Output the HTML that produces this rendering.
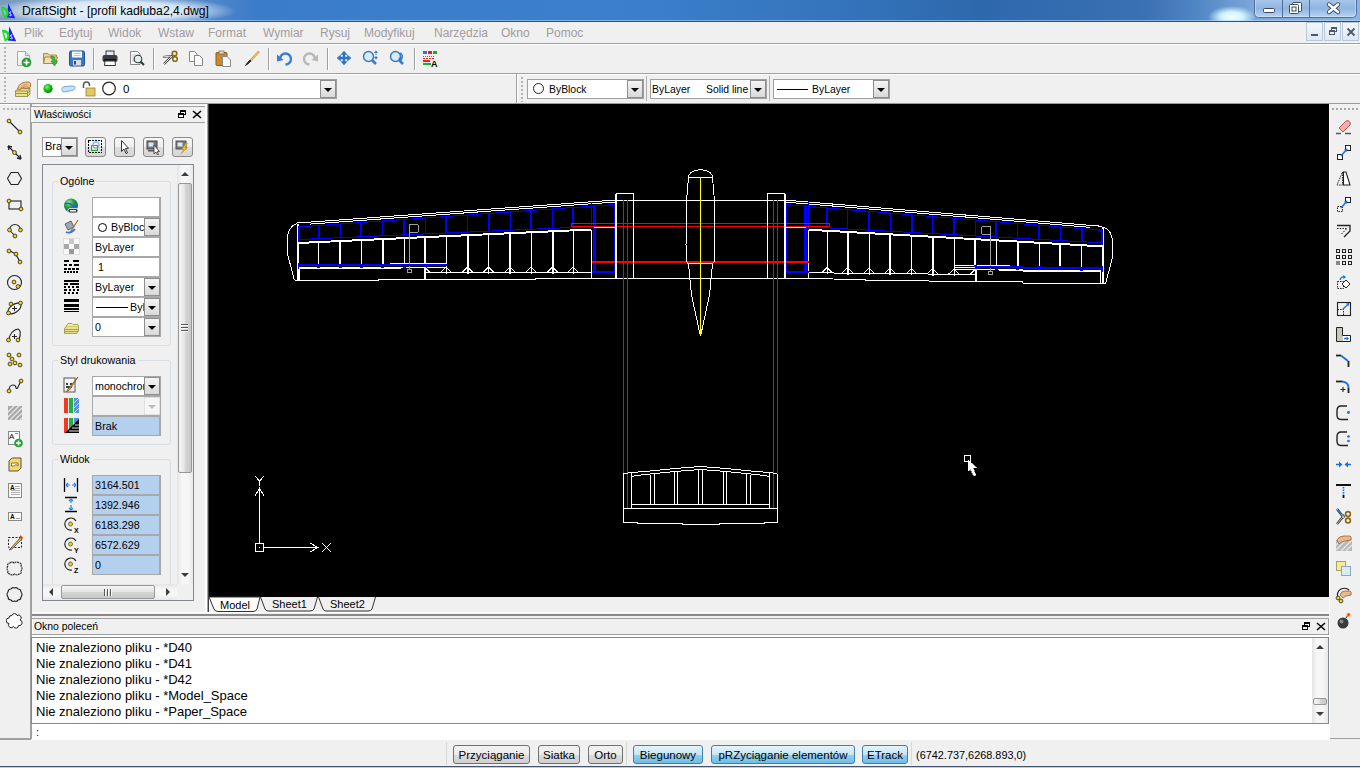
<!DOCTYPE html>
<html><head><meta charset="utf-8">
<style>
*{box-sizing:border-box;margin:0;padding:0}
html,body{width:1360px;height:768px;overflow:hidden;background:#f0f0f0;font-family:"Liberation Sans",sans-serif;font-size:12px;color:#000}
.a{position:absolute}
#title{left:0;top:0;width:1360px;height:21px;background:linear-gradient(90deg,#7c9cbc 0%,#6f98c8 8%,#5488c8 15%,#3a7cc8 19%,#3c80cc 45%,#3474bc 62%,#2e68ac 72%,#3a70b4 84%,#4f86c4 88%,#7aa6d8 92%,#8cb4e0 100%)}
#titleline{left:0;top:21px;width:1360px;height:1px;background:#3f4d5e}
.mi{position:absolute;top:26px;color:#a09ca0;font-size:12px;line-height:14px}
.hl{position:absolute;height:1px;background:#a0a0a0}
.vl{position:absolute;width:1px;background:#a0a0a0}
.grip{position:absolute;width:2px;border-left:1px dotted #a0a0a0}
.combo{position:absolute;background:#fff;border:1px solid #8e8f8f}
.ddb{position:absolute;top:1px;width:16px;bottom:1px;right:1px;background:linear-gradient(#f2f2f2,#d8d8d8);border:1px solid #9b9b9b}
.ddb:after{content:"";position:absolute;left:4px;top:6px;border-left:4px solid transparent;border-right:4px solid transparent;border-top:4px solid #000}
.ptxt{position:absolute;font-size:11px;line-height:13px}
.field{position:absolute;left:92px;width:69px;height:20px;background:#fff;border:1px solid #a0a0a0;font-size:11px;line-height:17px;padding-left:2px;overflow:hidden;white-space:nowrap;color:#000}
.blue{background:#b5d1ee}
.gbox{position:absolute;left:52px;width:119px;border:1px solid #d5dfe5;border-radius:3px}
.glabel{position:absolute;left:59px;font-size:11px;line-height:13px;background:#f0f0f0;padding:0 2px;color:#000}
.sbtn{position:absolute;top:745px;height:19px;border:1px solid #707070;border-radius:3px;background:linear-gradient(#f2f2f2 0%,#ebebeb 50%,#dddddd 51%,#cfcfcf 100%);font-size:11.5px;line-height:18px;text-align:center;color:#000}
.sbtn.on{border-color:#3c7fb1;background:linear-gradient(#e5f4fc 0%,#c4e5f6 50%,#98d1ef 51%,#6dbde9 100%)}
.cmd{position:absolute;left:36px;font-size:13px;line-height:16px;color:#000;white-space:nowrap}
</style></head><body>
<!-- title bar -->
<div id="title" class="a"></div>
<div class="a" style="left:0;top:0;width:300px;height:21px;background:radial-gradient(ellipse 125px 15px at 112px 11px,rgba(240,248,255,0.95) 0%,rgba(235,245,255,0.85) 60%,rgba(255,255,255,0) 100%)"></div>
<div class="a" style="left:1190px;top:0;width:90px;height:21px;background:radial-gradient(ellipse 24px 11px at 42px 17px,rgba(235,255,255,1) 0%,rgba(215,250,255,0.95) 45%,rgba(255,255,255,0) 100%)"></div>
<div class="a" style="left:0;top:20px;width:1360px;height:1px;background:rgba(190,220,250,0.55)"></div>
<div id="titleline" class="a"></div>
<div class="a" style="left:22px;top:3px;font-size:12.2px;line-height:16px;color:#000">DraftSight - [profil kadłuba2,4.dwg]</div>
<!-- menu bar -->
<div class="a" style="left:0;top:22px;width:1360px;height:21px;background:#f0f0f0"></div>
<div class="hl" style="left:0;top:43px;width:1360px"></div>
<div class="mi" style="left:24px">Plik</div>
<div class="mi" style="left:59px">Edytuj</div>
<div class="mi" style="left:108px">Widok</div>
<div class="mi" style="left:158px">Wstaw</div>
<div class="mi" style="left:208px">Format</div>
<div class="mi" style="left:263px">Wymiar</div>
<div class="mi" style="left:320px">Rysuj</div>
<div class="mi" style="left:364px">Modyfikuj</div>
<div class="mi" style="left:434px">Narzędzia</div>
<div class="mi" style="left:501px">Okno</div>
<div class="mi" style="left:546px">Pomoc</div>
<!-- toolbars -->
<div class="hl" style="left:0;top:73px;width:1360px"></div>
<div class="hl" style="left:0;top:103px;width:1360px;background:#9a9a9a"></div>

<!-- left toolbar -->
<div class="vl" style="left:30px;top:104px;height:636px"></div>
<!-- properties panel -->
<!--PANEL-->
<div class="a" style="left:30px;top:104px;width:2px;height:635px;background:#a0a0a0"></div>
<div class="a" style="left:0;top:738px;width:31px;height:2px;background:#a0a0a0"></div>
<div class="a" style="left:0;top:104px;width:30px;height:1px;background:#fff"></div>
<div class="a" style="left:3px;top:108px;width:26px;height:2px;background:repeating-linear-gradient(90deg,#b4b4b4 0 2px,transparent 2px 4px)"></div>
<div class="a" style="left:32px;top:105px;width:174px;height:1px;background:#fff"></div>
<div class="a" style="left:31px;top:106px;width:175px;height:17px;border:1px solid #a0a0a0;border-left:none;background:#f0f0f0"></div>
<div class="a" style="left:32px;top:107px;width:1px;height:15px;background:#fff"></div>
<div class="ptxt" style="left:34px;top:108px;font-size:10.5px;line-height:13px">Właściwości</div>
<svg class="a" style="left:177px;top:109px" width="10" height="10" shape-rendering="crispEdges"><rect x="3.5" y="1.5" width="5" height="4" fill="none" stroke="#000"/><rect x="3" y="1" width="6" height="2" fill="#000"/><rect x="1.5" y="4.5" width="5" height="4" fill="#fff" stroke="#000"/><rect x="1" y="4" width="6" height="2" fill="#000"/></svg>
<svg class="a" style="left:192px;top:110px" width="10" height="9"><path d="M1 1L9 8M9 1L1 8" stroke="#000" stroke-width="1.6"/></svg>
<div class="a" style="left:206px;top:104px;width:1px;height:510px;background:#f8f8f8"></div>
<div class="combo" style="left:42px;top:137px;width:36px;height:20px;border-color:#9b9b9b"></div>
<div class="ptxt" style="left:45px;top:140px;font-size:11px">Bra</div>
<div class="a" style="left:61px;top:138px;width:16px;height:18px;background:linear-gradient(#f4f4f4,#d9d9d9);border:1px solid #8e8e8e"><div style="position:absolute;left:3px;top:7px;border-left:4px solid transparent;border-right:4px solid transparent;border-top:4px solid #000"></div></div>
<div class="a" style="left:85px;top:137px;width:21px;height:20px;border:1px solid #8a8a8a;border-radius:3px;background:linear-gradient(#f7f7f7 0%,#efefef 50%,#dcdcdc 51%,#d7d7d7 100%)"></div>
<div class="a" style="left:114px;top:137px;width:21px;height:20px;border:1px solid #8a8a8a;border-radius:3px;background:linear-gradient(#f7f7f7 0%,#efefef 50%,#dcdcdc 51%,#d7d7d7 100%)"></div>
<div class="a" style="left:143px;top:137px;width:21px;height:20px;border:1px solid #8a8a8a;border-radius:3px;background:linear-gradient(#f7f7f7 0%,#efefef 50%,#dcdcdc 51%,#d7d7d7 100%)"></div>
<div class="a" style="left:172px;top:137px;width:21px;height:20px;border:1px solid #8a8a8a;border-radius:3px;background:linear-gradient(#f7f7f7 0%,#efefef 50%,#dcdcdc 51%,#d7d7d7 100%)"></div>
<svg class="a" style="left:87px;top:139px" width="17" height="16" shape-rendering="crispEdges"><rect x="1.5" y="1.5" width="13" height="12" fill="none" stroke="#000" stroke-dasharray="2,1"/><rect x="4.5" y="6.5" width="6" height="5" fill="none" stroke="#1ab01a"/><circle cx="9" cy="6" r="3.2" fill="none" stroke="#6a9cf0" shape-rendering="auto"/></svg>
<svg class="a" style="left:116px;top:139px" width="17" height="16"><path d="M5.5 1.5L5.5 12.5L8 10L10 14.5L11.5 13.8L9.5 9.5L12.5 9.3Z" fill="#fff" stroke="#333" stroke-width="1"/></svg>
<svg class="a" style="left:145px;top:139px" width="17" height="16"><rect x="2" y="2" width="10" height="8" fill="#777" stroke="#444"/><rect x="3.5" y="3.5" width="5" height="4" fill="#d8e8f8"/><rect x="3" y="11" width="7" height="1.5" fill="#555"/><path d="M9 6L9 15L11 13L12.5 16L13.5 15.5L12.3 12.6L14.5 12.5Z" fill="#fff" stroke="#333" stroke-width="0.8"/></svg>
<svg class="a" style="left:174px;top:139px" width="17" height="16"><rect x="2" y="2" width="10" height="8" fill="#777" stroke="#555"/><rect x="3.5" y="3.5" width="5" height="4" fill="#d8e8f8"/><path d="M12 4L7.5 10.5L10 10.5L7 15L13.5 8.5L11 8.5L13.5 4Z" fill="#e8c020" stroke="#b08800" stroke-width="0.5"/></svg>
<div class="a" style="left:42px;top:164px;width:152px;height:437px;border:1px solid #828790;background:#f0f0f0"></div>
<div class="a" style="left:177px;top:165px;width:16px;height:419px;background:linear-gradient(90deg,#e4e4e4,#f6f6f6 30%,#f6f6f6 70%,#e8e8e8)"></div>
<div class="a" style="left:181px;top:172px;border-left:4px solid transparent;border-right:4px solid transparent;border-bottom:4px solid #3d3d3d"></div>
<div class="a" style="left:178px;top:183px;width:14px;height:290px;border:1px solid #979797;border-radius:2px;background:linear-gradient(90deg,#f4f4f4 0%,#e6e6e6 45%,#d4d4d4 55%,#c8c8c8 100%)"></div>
<svg class="a" style="left:180px;top:323px" width="9" height="9" shape-rendering="crispEdges"><path d="M1 1.5H8M1 4.5H8M1 7.5H8" stroke="#555" stroke-width="1"/><path d="M1 2.5H8M1 5.5H8M1 8.5H8" stroke="#fff" stroke-width="1"/></svg>
<div class="a" style="left:181px;top:573px;border-left:4px solid transparent;border-right:4px solid transparent;border-top:4px solid #3d3d3d"></div>
<div class="a" style="left:43px;top:584px;width:134px;height:16px;background:linear-gradient(#e4e4e4,#f6f6f6 30%,#f6f6f6 70%,#e8e8e8)"></div>
<div class="a" style="left:177px;top:584px;width:16px;height:16px;background:#f0f0f0"></div>
<div class="a" style="left:49px;top:588px;border-top:4px solid transparent;border-bottom:4px solid transparent;border-right:4px solid #3d3d3d"></div>
<div class="a" style="left:166px;top:588px;border-top:4px solid transparent;border-bottom:4px solid transparent;border-left:4px solid #3d3d3d"></div>
<div class="a" style="left:61px;top:585px;width:94px;height:14px;border:1px solid #979797;border-radius:2px;background:linear-gradient(#f4f4f4 0%,#e6e6e6 45%,#d4d4d4 55%,#c8c8c8 100%)"></div>
<svg class="a" style="left:103px;top:588px" width="9" height="9" shape-rendering="crispEdges"><path d="M1.5 1V8M4.5 1V8M7.5 1V8" stroke="#555" stroke-width="1"/><path d="M2.5 1V8M5.5 1V8M8.5 1V8" stroke="#fff" stroke-width="1"/></svg>
<div class="a" style="left:43px;top:165px;width:134px;height:419px;overflow:hidden">
<div class="a" style="left:9px;top:16px;width:119px;height:165px;border:1px solid #d5dfe5;border-radius:3px"></div>
<div class="a" style="left:15px;top:10px;width:38px;height:13px;background:#f0f0f0"></div>
<div class="ptxt" style="left:17px;top:10px;font-size:10.7px">Ogólne</div>
<div class="a" style="left:9px;top:195px;width:119px;height:85px;border:1px solid #d5dfe5;border-radius:3px"></div>
<div class="a" style="left:15px;top:189px;width:80px;height:13px;background:#f0f0f0"></div>
<div class="ptxt" style="left:17px;top:189px;font-size:10.7px">Styl drukowania</div>
<div class="a" style="left:9px;top:294px;width:119px;height:200px;border:1px solid #d5dfe5;border-radius:3px"></div>
<div class="a" style="left:15px;top:288px;width:36px;height:13px;background:#f0f0f0"></div>
<div class="ptxt" style="left:17px;top:288px;font-size:10.7px">Widok</div>
<div class="a" style="left:49px;top:32px;width:69px;height:20px;background:#fff;border:1px solid #a8a8a8;border-width:1px 2px 1px 1px"></div>
<div class="a" style="left:49px;top:52px;width:69px;height:20px;background:#fff;border:1px solid #a8a8a8;border-width:1px 2px 1px 1px"></div>
<div class="ptxt" style="left:52px;top:56px;font-size:10.7px;white-space:nowrap;overflow:hidden;width:50px"><span style="display:inline-block;width:9px;height:9px;border:1px solid #000;border-radius:50%;margin:0 4px 0 3px;vertical-align:-1px"></span>ByBloc</div>
<div class="a" style="left:101px;top:53px;width:16px;height:18px;background:linear-gradient(#f4f4f4,#d9d9d9);border:1px solid #8e8e8e"><div style="position:absolute;left:3px;top:7px;border-left:4px solid transparent;border-right:4px solid transparent;border-top:4px solid #000"></div></div>
<div class="a" style="left:49px;top:72px;width:69px;height:20px;background:#fff;border:1px solid #a8a8a8;border-width:1px 2px 1px 1px"></div>
<div class="ptxt" style="left:52px;top:76px;font-size:10.7px;white-space:nowrap;overflow:hidden;width:64px">ByLayer</div>
<div class="a" style="left:49px;top:92px;width:69px;height:20px;background:#fff;border:1px solid #a8a8a8;border-width:1px 2px 1px 1px"></div>
<div class="ptxt" style="left:52px;top:96px;font-size:10.7px;white-space:nowrap;overflow:hidden;width:64px">&nbsp;1</div>
<div class="a" style="left:49px;top:112px;width:69px;height:20px;background:#fff;border:1px solid #a8a8a8;border-width:1px 2px 1px 1px"></div>
<div class="ptxt" style="left:52px;top:116px;font-size:10.7px;white-space:nowrap;overflow:hidden;width:50px">ByLayer</div>
<div class="a" style="left:101px;top:113px;width:16px;height:18px;background:linear-gradient(#f4f4f4,#d9d9d9);border:1px solid #8e8e8e"><div style="position:absolute;left:3px;top:7px;border-left:4px solid transparent;border-right:4px solid transparent;border-top:4px solid #000"></div></div>
<div class="a" style="left:49px;top:132px;width:69px;height:20px;background:#fff;border:1px solid #a8a8a8;border-width:1px 2px 1px 1px"></div>
<div class="ptxt" style="left:52px;top:136px;font-size:10.7px;white-space:nowrap;overflow:hidden;width:50px"><span style="display:inline-block;width:32px;height:1px;background:#000;vertical-align:3px;margin-right:2px;margin-left:1px"></span>ByLayer</div>
<div class="a" style="left:101px;top:133px;width:16px;height:18px;background:linear-gradient(#f4f4f4,#d9d9d9);border:1px solid #8e8e8e"><div style="position:absolute;left:3px;top:7px;border-left:4px solid transparent;border-right:4px solid transparent;border-top:4px solid #000"></div></div>
<div class="a" style="left:49px;top:152px;width:69px;height:20px;background:#fff;border:1px solid #a8a8a8;border-width:1px 2px 1px 1px"></div>
<div class="ptxt" style="left:52px;top:156px;font-size:10.7px;white-space:nowrap;overflow:hidden;width:50px">0</div>
<div class="a" style="left:101px;top:153px;width:16px;height:18px;background:linear-gradient(#f4f4f4,#d9d9d9);border:1px solid #8e8e8e"><div style="position:absolute;left:3px;top:7px;border-left:4px solid transparent;border-right:4px solid transparent;border-top:4px solid #000"></div></div>
<div class="a" style="left:49px;top:211px;width:69px;height:20px;background:#fff;border:1px solid #a8a8a8;border-width:1px 2px 1px 1px"></div>
<div class="ptxt" style="left:52px;top:215px;font-size:10.7px;white-space:nowrap;overflow:hidden;width:50px">monochrome.ctb</div>
<div class="a" style="left:101px;top:212px;width:16px;height:18px;background:linear-gradient(#f4f4f4,#d9d9d9);border:1px solid #8e8e8e"><div style="position:absolute;left:3px;top:7px;border-left:4px solid transparent;border-right:4px solid transparent;border-top:4px solid #000"></div></div>
<div class="a" style="left:49px;top:231px;width:69px;height:20px;background:#f0f0f0;border:1px solid #a8a8a8;border-width:1px 2px 1px 1px"></div>
<div class="a" style="left:101px;top:232px;width:16px;height:18px;background:#f6f6f6;border:1px solid #e0e0e0"><div style="position:absolute;left:3px;top:7px;border-left:4px solid transparent;border-right:4px solid transparent;border-top:4px solid #bbb"></div></div>
<div class="a" style="left:49px;top:251px;width:69px;height:20px;background:#b4d0ef;border:1px solid #a8a8a8;border-width:1px 2px 1px 1px"></div>
<div class="ptxt" style="left:52px;top:255px;font-size:10.7px;white-space:nowrap;overflow:hidden;width:64px">Brak</div>
<div class="a" style="left:49px;top:310px;width:69px;height:20px;background:#b4d0ef;border:1px solid #a8a8a8;border-width:1px 2px 1px 1px"></div>
<div class="ptxt" style="left:52px;top:314px;font-size:10.7px;white-space:nowrap;overflow:hidden;width:64px">3164.501</div>
<div class="a" style="left:49px;top:330px;width:69px;height:20px;background:#b4d0ef;border:1px solid #a8a8a8;border-width:1px 2px 1px 1px"></div>
<div class="ptxt" style="left:52px;top:334px;font-size:10.7px;white-space:nowrap;overflow:hidden;width:64px">1392.946</div>
<div class="a" style="left:49px;top:350px;width:69px;height:20px;background:#b4d0ef;border:1px solid #a8a8a8;border-width:1px 2px 1px 1px"></div>
<div class="ptxt" style="left:52px;top:354px;font-size:10.7px;white-space:nowrap;overflow:hidden;width:64px">6183.298</div>
<div class="a" style="left:49px;top:370px;width:69px;height:20px;background:#b4d0ef;border:1px solid #a8a8a8;border-width:1px 2px 1px 1px"></div>
<div class="ptxt" style="left:52px;top:374px;font-size:10.7px;white-space:nowrap;overflow:hidden;width:64px">6572.629</div>
<div class="a" style="left:49px;top:390px;width:69px;height:20px;background:#b4d0ef;border:1px solid #a8a8a8;border-width:1px 2px 1px 1px"></div>
<div class="ptxt" style="left:52px;top:394px;font-size:10.7px;white-space:nowrap;overflow:hidden;width:64px">0</div>
<svg class="a" style="left:20px;top:33px" width="17" height="17"><defs><radialGradient id="gl" cx="0.35" cy="0.3" r="0.8"><stop offset="0" stop-color="#9fe8a0"/><stop offset="0.45" stop-color="#1e9a3a"/><stop offset="1" stop-color="#1650b8"/></radialGradient></defs><circle cx="8" cy="7.5" r="7" fill="url(#gl)"/><path d="M2 6Q6 4 9 7T14 9" fill="none" stroke="#2a60d0" stroke-width="1.5"/><rect x="5" y="10.5" width="10" height="4.5" rx="2" fill="#333" stroke="#fff" stroke-width="0.8"/><rect x="7" y="12" width="6" height="1.5" fill="#fff"/></svg>
<svg class="a" style="left:20px;top:53px" width="17" height="17"><path d="M2 6L8 3L11 9L5 12Z" fill="#9aa8b8" stroke="#445" stroke-width="0.8"/><path d="M3 14Q8 16 12 11" fill="none" stroke="#2a70e0" stroke-width="1.6"/><path d="M15 2L9 12L7.5 14L8.5 11.5Z" fill="#e0b060" stroke="#a07020" stroke-width="0.8"/></svg>
<svg class="a" style="left:20px;top:73px" width="17" height="17"><rect x="0.5" y="0.5" width="16" height="16" fill="#fafafa" stroke="#e0e0e0"/><rect x="6" y="1" width="5" height="5" fill="#c8c8c8"/><rect x="1" y="6" width="5" height="5" fill="#a8a8a8"/><rect x="11" y="6" width="5" height="5" fill="#a8a8a8"/><rect x="6" y="11" width="5" height="5" fill="#989898"/></svg>
<svg class="a" style="left:20px;top:94px" width="17" height="17"><g fill="#000" shape-rendering="crispEdges"><rect x="1" y="1" width="5" height="2"/><rect x="10" y="1" width="6" height="2"/><rect x="1" y="5" width="3" height="2"/><rect x="6" y="5" width="3" height="2"/><rect x="11" y="5" width="5" height="2"/><rect x="1" y="9" width="3" height="2"/><rect x="5" y="9" width="3" height="2"/><rect x="9" y="9" width="3" height="2"/><rect x="13" y="9" width="3" height="2"/><rect x="1" y="12" width="2" height="2"/><rect x="4" y="12" width="2" height="2"/><rect x="7" y="12" width="2" height="2"/><rect x="10" y="12" width="2" height="2"/><rect x="13" y="12" width="2" height="2"/></g></svg>
<svg class="a" style="left:20px;top:114px" width="17" height="17"><g fill="#000" shape-rendering="crispEdges"><rect x="1" y="1" width="15" height="2"/><rect x="1" y="4" width="4" height="2"/><rect x="7" y="4" width="9" height="2"/><rect x="1" y="7" width="2" height="2"/><rect x="5" y="7" width="2" height="2"/><rect x="9" y="7" width="2" height="2"/><rect x="13" y="7" width="3" height="2"/><rect x="1" y="10" width="3" height="2"/><rect x="6" y="10" width="2" height="2"/><rect x="10" y="10" width="2" height="2"/><rect x="14" y="10" width="2" height="2"/><rect x="1" y="13" width="2" height="2"/><rect x="5" y="13" width="2" height="2"/><rect x="9" y="13" width="2" height="2"/><rect x="13" y="13" width="2" height="2"/></g></svg>
<svg class="a" style="left:20px;top:133px" width="17" height="17"><g fill="#000" shape-rendering="crispEdges"><rect x="1" y="1" width="15" height="3"/><rect x="1" y="6" width="15" height="3"/><rect x="1" y="10" width="15" height="2"/><rect x="1" y="13" width="15" height="1"/></g></svg>
<svg class="a" style="left:20px;top:154px" width="17" height="17"><path d="M1.5 9.5L3 7.5H15.5V12L14 14.5H1.5Z" fill="#e8e08a" stroke="#9a9040" stroke-width="0.8"/><path d="M1.5 10.5H15.5M1.5 12.5H15" stroke="#9a9040" stroke-width="0.8"/><path d="M3 7.5L5 4.5H9L10 5.5H15L15.5 7.5" fill="#f4ec9a" stroke="#9a9040" stroke-width="0.8"/></svg>
<svg class="a" style="left:20px;top:211px" width="17" height="17"><rect x="1" y="2" width="11" height="14" fill="#f4f4f4" stroke="#555" stroke-width="1"/><path d="M3 8H5M7 8H9M3 11H9" stroke="#000" stroke-width="1.5"/><path d="M15 1L5 13L3.5 15.5L6.5 14Z" fill="#e0a040" stroke="#805010" stroke-width="0.8"/></svg>
<svg class="a" style="left:20px;top:232px" width="17" height="17"><rect x="1" y="1" width="4" height="15" fill="#f03a20"/><rect x="6" y="1" width="4" height="15" fill="#22b040"/><rect x="11" y="1" width="5" height="15" fill="#5590e8"/><path d="M11 6L16 1M11 11L16 6M11 16L16 11" stroke="#cfe0ff" stroke-width="1"/></svg>
<svg class="a" style="left:20px;top:252px" width="17" height="17"><rect x="1" y="1" width="4" height="15" fill="#f03a20"/><rect x="6" y="1" width="4" height="11" fill="#22b040"/><rect x="11" y="1" width="5" height="5" fill="#5590e8"/><path d="M2 16L16 2L16 16Z" fill="#000"/><path d="M6 14H16M9 11H16M12 8H16" stroke="#fff" stroke-width="0.9"/></svg>
<svg class="a" style="left:20px;top:312px" width="17" height="17"><path d="M1.5 1V15M14.5 1V15" stroke="#000" stroke-width="1.3"/><path d="M3 8H7M9 8H13" stroke="#2a7ae8" stroke-width="1.2"/><path d="M3 8L5 6M3 8L5 10M13 8L11 6M13 8L11 10" stroke="#2a7ae8" stroke-width="1.2"/></svg>
<svg class="a" style="left:20px;top:331px" width="17" height="17"><path d="M2 1.5H14M2 15.5H14" stroke="#000" stroke-width="1.3"/><path d="M8 3V7M8 9V14" stroke="#2a7ae8" stroke-width="1.2"/><path d="M8 3L6 5M8 3L10 5M8 14L6 12M8 14L10 12" stroke="#2a7ae8" stroke-width="1.2"/></svg>
<svg class="a" style="left:20px;top:351px" width="17" height="17"><path d="M13 5A6 6 0 1 0 9 14" fill="none" stroke="#222" stroke-width="1.2"/><circle cx="7.5" cy="8" r="2" fill="#f0e000" stroke="#222" stroke-width="0.6"/><text x="11" y="16.5" font-size="7" font-weight="bold" font-family="Liberation Sans" fill="#000">X</text></svg>
<svg class="a" style="left:20px;top:371px" width="17" height="17"><path d="M13 5A6 6 0 1 0 9 14" fill="none" stroke="#222" stroke-width="1.2"/><circle cx="7.5" cy="8" r="2" fill="#f0e000" stroke="#222" stroke-width="0.6"/><text x="11" y="16.5" font-size="7" font-weight="bold" font-family="Liberation Sans" fill="#000">Y</text></svg>
<svg class="a" style="left:20px;top:391px" width="17" height="17"><path d="M13 5A6 6 0 1 0 9 14" fill="none" stroke="#222" stroke-width="1.2"/><circle cx="7.5" cy="8" r="2" fill="#f0e000" stroke="#222" stroke-width="0.6"/><text x="11" y="16.5" font-size="7" font-weight="bold" font-family="Liberation Sans" fill="#000">Z</text></svg>
</div>
<!--/PANEL-->
<!--LTB-->
<svg class="a" style="left:6px;top:118px" width="18" height="18"><path d="M3 3L14 14" fill="none" stroke="#222" stroke-width="1.1"/><circle cx="3" cy="3" r="1.9" fill="#ffd800" stroke="#333" stroke-width="0.9"/><circle cx="14" cy="14" r="1.9" fill="#ffd800" stroke="#333" stroke-width="0.9"/></svg>
<svg class="a" style="left:6px;top:144px" width="18" height="18"><path d="M2 2L15 15" fill="none" stroke="#222" stroke-width="1.1"/><path d="M2 2L6 3M2 2L3 6M15 15L11 14M15 15L14 11" stroke="#222" stroke-width="1.3"/><circle cx="8.5" cy="8.5" r="1.9" fill="#ffd800" stroke="#333" stroke-width="0.9"/></svg>
<svg class="a" style="left:6px;top:170px" width="18" height="18"><path d="M5 2.5H12L15.5 8.5L12 14.5H5L1.5 8.5Z" fill="none" stroke="#222" stroke-width="1.1"/></svg>
<svg class="a" style="left:6px;top:196px" width="18" height="18"><rect x="3" y="5" width="12" height="8" fill="none" stroke="#222" stroke-width="1.1"/><circle cx="3" cy="5" r="1.9" fill="#ffd800" stroke="#333" stroke-width="0.9"/><circle cx="15" cy="13" r="1.9" fill="#ffd800" stroke="#333" stroke-width="0.9"/></svg>
<svg class="a" style="left:6px;top:222px" width="18" height="18"><path d="M3.5 8A5.5 5.5 0 0 1 14.5 8" fill="none" stroke="#222" stroke-width="1.1"/><path d="M3.5 8L9 14" fill="none" stroke="#222" stroke-width="1.1"/><circle cx="3.5" cy="8" r="1.9" fill="#ffd800" stroke="#333" stroke-width="0.9"/><circle cx="14.5" cy="8" r="1.9" fill="#ffd800" stroke="#333" stroke-width="0.9"/><circle cx="9" cy="14" r="1.9" fill="#ffd800" stroke="#333" stroke-width="0.9"/></svg>
<svg class="a" style="left:6px;top:248px" width="18" height="18"><path d="M3 3Q10 4 14 14" fill="none" stroke="#222" stroke-width="1.1"/><circle cx="3" cy="3" r="1.9" fill="#ffd800" stroke="#333" stroke-width="0.9"/><circle cx="10" cy="6" r="1.9" fill="#ffd800" stroke="#333" stroke-width="0.9"/><circle cx="14" cy="14" r="1.9" fill="#ffd800" stroke="#333" stroke-width="0.9"/></svg>
<svg class="a" style="left:6px;top:274px" width="18" height="18"><circle cx="8.5" cy="8.5" r="7" fill="none" stroke="#222" stroke-width="1.1"/><circle cx="8" cy="8" r="1.9" fill="#ffd800" stroke="#333" stroke-width="0.9"/><circle cx="12" cy="12.5" r="1.9" fill="#ffd800" stroke="#333" stroke-width="0.9"/></svg>
<svg class="a" style="left:6px;top:300px" width="18" height="18"><ellipse cx="8.5" cy="8.5" rx="7.5" ry="4" transform="rotate(-35 8.5 8.5)" fill="none" stroke="#222" stroke-width="1.1"/><path d="M8.5 6V11M6 8.5H11" stroke="#222" stroke-width="1"/><circle cx="2.5" cy="13" r="1.9" fill="#ffd800" stroke="#333" stroke-width="0.9"/><circle cx="5" cy="4" r="1.9" fill="#ffd800" stroke="#333" stroke-width="0.9"/><circle cx="14.5" cy="3" r="1.9" fill="#ffd800" stroke="#333" stroke-width="0.9"/></svg>
<svg class="a" style="left:6px;top:326px" width="18" height="18"><path d="M2.5 14Q5 4 12 3Q16 4 13 14" fill="none" stroke="#222" stroke-width="1.1"/><path d="M8.5 8V13M6 10.5H11" stroke="#222" stroke-width="1"/><circle cx="2.5" cy="14" r="1.9" fill="#ffd800" stroke="#333" stroke-width="0.9"/><circle cx="12" cy="14" r="1.9" fill="#ffd800" stroke="#333" stroke-width="0.9"/></svg>
<svg class="a" style="left:6px;top:352px" width="18" height="18"><circle cx="3" cy="3" r="1.9" fill="#ffd800" stroke="#333" stroke-width="0.9"/><circle cx="13" cy="3" r="1.9" fill="#ffd800" stroke="#333" stroke-width="0.9"/><circle cx="6" cy="7" r="1.9" fill="#ffd800" stroke="#333" stroke-width="0.9"/><circle cx="4" cy="12" r="1.9" fill="#ffd800" stroke="#333" stroke-width="0.9"/><circle cx="9" cy="11" r="1.9" fill="#ffd800" stroke="#333" stroke-width="0.9"/><circle cx="14" cy="13" r="1.9" fill="#ffd800" stroke="#333" stroke-width="0.9"/></svg>
<svg class="a" style="left:6px;top:378px" width="18" height="18"><path d="M3 13Q3 7 7 7Q10 7 10 10Q11 12 13 7L15 3" fill="none" stroke="#222" stroke-width="1.1" stroke-width="1.4"/><circle cx="3" cy="13" r="1.9" fill="#ffd800" stroke="#333" stroke-width="0.9"/><circle cx="15" cy="3" r="1.9" fill="#ffd800" stroke="#333" stroke-width="0.9"/></svg>
<svg class="a" style="left:6px;top:404px" width="18" height="18"><rect x="2" y="2" width="14" height="14" fill="#a8a8a8"/><path d="M2 8L8 2M2 13L13 2M4 16L16 4M9 16L16 9M14 16L16 14" stroke="#e8e8e8" stroke-width="1.2"/></svg>
<svg class="a" style="left:6px;top:430px" width="18" height="18"><rect x="2.5" y="1.5" width="11" height="13" fill="#fff" stroke="#888"/><text x="3" y="9" font-size="8" font-family="Liberation Sans" fill="#000">A</text><path d="M9 3.5H12" stroke="#888"/><circle cx="12.5" cy="13" r="4.3" fill="#1aa52a"/><path d="M12.5 10.5V15.5M10 13H15" stroke="#fff" stroke-width="1.5"/></svg>
<svg class="a" style="left:6px;top:456px" width="18" height="18"><path d="M3 5L6 2H15L15 12L12 15H3Z" fill="#f8d860" stroke="#555" stroke-width="1"/><path d="M5.5 10V7H12V10L10 8.5L8 10Z" fill="#fff" stroke="#555" stroke-width="0.8"/></svg>
<svg class="a" style="left:6px;top:482px" width="18" height="18"><rect x="2.5" y="1.5" width="13" height="14" fill="#fff" stroke="#888"/><path d="M5 8.5H14M5 10.5H14M5 12.5H14M9 4.5H14M9 6.5H14" stroke="#999" stroke-width="0.8"/><text x="4" y="8" font-size="6.5" font-weight="bold" font-family="Liberation Sans" fill="#000">A</text></svg>
<svg class="a" style="left:6px;top:508px" width="18" height="18"><rect x="2.5" y="4.5" width="13" height="8" fill="#fff" stroke="#888"/><text x="4" y="11" font-size="6.5" font-weight="bold" font-family="Liberation Sans" fill="#000">A</text><path d="M10 10.5H14" stroke="#888" stroke-width="0.8"/></svg>
<svg class="a" style="left:6px;top:534px" width="18" height="18"><rect x="2.5" y="3.5" width="13" height="10" fill="none" stroke="#222" stroke-dasharray="2,1.5"/><path d="M15 3L5 14L3 16L6 15L16 5Z" fill="#f0c020" stroke="#444" stroke-width="0.8"/><path d="M14 2L16.5 4.5" stroke="#e04040" stroke-width="2"/></svg>
<svg class="a" style="left:6px;top:560px" width="18" height="18"><path d="M4 3Q6 1 8 3Q10 1 13 3Q16 3 15 6Q17 8.5 15 11Q16 14 13 14Q11 16 8.5 14Q6 16 4 14Q1 14 2 11Q0 8.5 2 6Q1 3 4 3Z" fill="none" stroke="#222" stroke-width="1.1" stroke-width="1" stroke-dasharray="2,0.6"/></svg>
<svg class="a" style="left:6px;top:586px" width="18" height="18"><path d="M8.5 2Q11 1 12 3Q15 3 15 6Q17 8.5 15 11Q15 14 12 14Q11 16 8.5 15Q6 16 5 14Q2 14 2 11Q0 8.5 2 6Q2 3 5 3Q6 1 8.5 2Z" fill="none" stroke="#222" stroke-width="1.1" stroke-width="1"/></svg>
<svg class="a" style="left:6px;top:612px" width="18" height="18"><path d="M6 3.5A2.6 2.6 0 0 1 11 3.5A2.6 2.6 0 0 1 14 8A2.6 2.6 0 0 1 12.5 13.5A2.6 2.6 0 0 1 7.5 14.5A2.6 2.6 0 0 1 3 11.5A2.6 2.6 0 0 1 3 6A2.6 2.6 0 0 1 6 3.5Z" fill="#fff" stroke="#222" stroke-width="1"/></svg>
<svg class="a" style="left:1335px;top:118px" width="18" height="18"><path d="M4 10L11 3Q13 2 14.5 3.5Q16 5 15 7L8 14Z" fill="#f4b0a8" stroke="#b04a40" stroke-width="0.9"/><path d="M1 15.5H6M10 15.5H16" stroke="#555" stroke-width="1.6"/></svg>
<svg class="a" style="left:1335px;top:144px" width="18" height="18"><rect x="2.5" y="10.5" width="5" height="5" fill="#fff" stroke="#222"/><rect x="10.5" y="1.5" width="5" height="5" fill="#fff" stroke="#222"/><path d="M6 12L12 5" stroke="#1a6ee8" stroke-width="1.4"/><path d="M12.5 4.5L9 5.5L11.5 8Z" fill="#1a6ee8"/></svg>
<svg class="a" style="left:1335px;top:170px" width="18" height="18"><path d="M7.5 2V15H2Z" fill="none" stroke="#222" stroke-width="1" stroke-dasharray="1.5,1"/><path d="M8.5 2H11L15 15H8.5Z" fill="#fff" stroke="#222" stroke-width="1.1"/></svg>
<svg class="a" style="left:1335px;top:196px" width="18" height="18"><rect x="2.5" y="10.5" width="5" height="5" fill="none" stroke="#222" stroke-dasharray="1.5,1"/><rect x="10.5" y="1.5" width="5" height="5" fill="#fff" stroke="#222"/><path d="M6 12L12 5" stroke="#1a6ee8" stroke-width="1.4"/><path d="M12.5 4.5L9 5.5L11.5 8Z" fill="#1a6ee8"/></svg>
<svg class="a" style="left:1335px;top:222px" width="18" height="18"><path d="M2 3.5H15V9L9 15" fill="none" stroke="#222" stroke-width="1.3"/><path d="M2 6.5H12L6 12.5" fill="none" stroke="#222" stroke-width="1" stroke-dasharray="1.5,1.2"/></svg>
<svg class="a" style="left:1335px;top:248px" width="18" height="18"><g fill="none" stroke="#222" shape-rendering="crispEdges"><rect x="1.5" y="1.5" width="3" height="3"/><rect x="7.5" y="1.5" width="3" height="3"/><rect x="13.5" y="1.5" width="3" height="3"/><rect x="1.5" y="7.5" width="3" height="3"/><rect x="7.5" y="7.5" width="3" height="3"/><rect x="13.5" y="7.5" width="3" height="3"/><rect x="7.5" y="13.5" width="3" height="3"/><rect x="13.5" y="13.5" width="3" height="3"/></g><rect x="1" y="13" width="4" height="4" fill="#888"/></svg>
<svg class="a" style="left:1335px;top:274px" width="18" height="18"><rect x="2.5" y="7.5" width="6" height="7" fill="none" stroke="#222" stroke-dasharray="1.5,1"/><path d="M11 6L15 10L11 14L7 10Z" fill="#fff" stroke="#222"/><path d="M5 6Q6 2 10 3" fill="none" stroke="#1a6ee8" stroke-width="1.3"/><path d="M11 3L8 1L8.5 5Z" fill="#1a6ee8"/></svg>
<svg class="a" style="left:1335px;top:300px" width="18" height="18"><rect x="2.5" y="2.5" width="13" height="13" fill="none" stroke="#222" stroke-width="1.1"/><rect x="2.5" y="9.5" width="6" height="6" fill="none" stroke="#222" stroke-dasharray="1.5,1"/><path d="M8 9L14 3.5" stroke="#1a6ee8" stroke-width="1.3"/><path d="M14.5 3L11 3.5L13.5 6Z" fill="#1a6ee8"/></svg>
<svg class="a" style="left:1335px;top:326px" width="18" height="18"><path d="M1.5 1.5H7.5V9.5H15.5V15.5H1.5Z" fill="#c8c8c0" stroke="#222" stroke-width="1"/><rect x="8" y="10" width="7" height="5" fill="#fff"/><path d="M9 12.5H13" stroke="#1a6ee8" stroke-width="1.3"/><path d="M14 12.5L11.5 10.5V14.5Z" fill="#1a6ee8"/></svg>
<svg class="a" style="left:1335px;top:352px" width="18" height="18"><path d="M1 3.5H6" stroke="#222" stroke-width="1.8"/><path d="M6 3.5L13 9" stroke="#1a6ee8" stroke-width="1.8"/><path d="M13.5 9V15" stroke="#222" stroke-width="1.8"/></svg>
<svg class="a" style="left:1335px;top:378px" width="18" height="18"><path d="M1 3.5H7" stroke="#222" stroke-width="1.8"/><path d="M7 3.5Q13.5 4 13.5 10" fill="none" stroke="#1a6ee8" stroke-width="1.8"/><path d="M13.5 10V15" stroke="#222" stroke-width="1.8"/><path d="M8 9V14M5.5 11.5H10.5" stroke="#222" stroke-width="1.1"/></svg>
<svg class="a" style="left:1335px;top:404px" width="18" height="18"><path d="M12 2H6Q2 2 2 7V11Q2 15.5 6 15.5H13" fill="none" stroke="#222" stroke-width="1.4"/><circle cx="13.5" cy="8.5" r="1.4" fill="#1a6ee8"/></svg>
<svg class="a" style="left:1335px;top:430px" width="18" height="18"><path d="M12 2H6Q2 2 2 7V11Q2 15.5 6 15.5H13" fill="none" stroke="#222" stroke-width="1.4"/><circle cx="13.5" cy="6.5" r="1.3" fill="#1a6ee8"/><circle cx="13.5" cy="11" r="1.3" fill="#1a6ee8"/></svg>
<svg class="a" style="left:1335px;top:456px" width="18" height="18"><path d="M1 8.5H6M11 8.5H16" stroke="#1a6ee8" stroke-width="1.6"/><path d="M7.5 8.5L4 5.5V11.5Z M9.5 8.5L13 5.5V11.5Z" fill="#1a6ee8"/></svg>
<svg class="a" style="left:1335px;top:482px" width="18" height="18"><path d="M1 3H16" stroke="#111" stroke-width="2"/><path d="M8.5 5V13" stroke="#1a6ee8" stroke-width="1.6" stroke-dasharray="1.5,1"/><path d="M8.5 13V16" stroke="#111" stroke-width="1.8"/></svg>
<svg class="a" style="left:1335px;top:508px" width="18" height="18"><path d="M2 1L9 10M2 16L9.5 7" stroke="#222" stroke-width="2.2"/><path d="M2 1L9 10M2 16L9.5 7" stroke="#fff" stroke-width="0.8"/><circle cx="13" cy="6" r="2.4" fill="none" stroke="#8a6a10" stroke-width="1.6"/><circle cx="13" cy="12.5" r="2.4" fill="none" stroke="#8a6a10" stroke-width="1.6"/><path d="M3 2L6 6" stroke="#1a6ee8" stroke-width="1.6"/></svg>
<svg class="a" style="left:1335px;top:534px" width="18" height="18"><rect x="1" y="6" width="16" height="11" fill="#b8b8b8"/><path d="M1 11L6 6M1 16L11 6M6 17L17 6M11 17L17 11" stroke="#e8e8e8" stroke-width="1.2"/><path d="M2 6Q4 2 9 2L15 2Q17 3 16 6L10 7Q6 8 4 10Z" fill="#e8b890" stroke="#9a6030" stroke-width="0.8"/></svg>
<svg class="a" style="left:1335px;top:560px" width="18" height="18"><rect x="1.5" y="1.5" width="9" height="9" fill="#f8e898" stroke="#a8a060"/><rect x="6.5" y="6.5" width="9" height="9" fill="#d8ecf8" stroke="#88a8c8"/></svg>
<svg class="a" style="left:1335px;top:586px" width="18" height="18"><path d="M3 12Q1 6 6 3Q11 1 14 4" fill="none" stroke="#222" stroke-width="1.1"/><path d="M5 9Q6 5 10 5L15 5Q17 6 16 9L11 10L8 12Z" fill="#e8b890" stroke="#9a6030" stroke-width="0.8"/><circle cx="3" cy="12" r="1.9" fill="#ffd800" stroke="#333" stroke-width="0.9"/><circle cx="6" cy="15" r="1.9" fill="#ffd800" stroke="#333" stroke-width="0.9"/></svg>
<svg class="a" style="left:1335px;top:612px" width="18" height="18"><circle cx="8" cy="11" r="5.5" fill="#3a3a3a"/><circle cx="6.5" cy="9.5" r="2" fill="#888"/><path d="M11 6L13 3" stroke="#555" stroke-width="1.3"/><circle cx="13.5" cy="2.8" r="2" fill="#ff9a00"/><circle cx="13.5" cy="2.8" r="1" fill="#ff2000"/></svg>
<div class="a" style="left:1332px;top:108px;width:26px;height:2px;background:repeating-linear-gradient(90deg,#a8a8a8 0 2px,transparent 2px 4px)"></div>
<div class="a" style="left:1330px;top:738px;width:30px;height:1px;background:#a0a0a0"></div>
<!--/LTB-->
<!--RTB--><!--/RTB-->
<!--TB-->
<div class="a" style="left:4px;top:47px;width:2px;height:25px;background:repeating-linear-gradient(#b4b4b4 0 2px,transparent 2px 4px)"></div>
<div class="a" style="left:0;top:44px;width:1360px;height:1px;background:#fff"></div>
<div class="a" style="left:0;top:74px;width:1360px;height:1px;background:#fff"></div>
<div class="a" style="left:93px;top:48px;width:1px;height:22px;background:#a0a0a0"></div><div class="a" style="left:94px;top:48px;width:1px;height:22px;background:#fff"></div>
<div class="a" style="left:153px;top:48px;width:1px;height:22px;background:#a0a0a0"></div><div class="a" style="left:154px;top:48px;width:1px;height:22px;background:#fff"></div>
<div class="a" style="left:268px;top:48px;width:1px;height:22px;background:#a0a0a0"></div><div class="a" style="left:269px;top:48px;width:1px;height:22px;background:#fff"></div>
<div class="a" style="left:327px;top:48px;width:1px;height:22px;background:#a0a0a0"></div><div class="a" style="left:328px;top:48px;width:1px;height:22px;background:#fff"></div>
<div class="a" style="left:414px;top:48px;width:1px;height:22px;background:#a0a0a0"></div><div class="a" style="left:415px;top:48px;width:1px;height:22px;background:#fff"></div>
<svg class="a" style="left:16px;top:50px" width="17" height="17"><defs><linearGradient id="pg" x1="0" y1="0" x2="1" y2="1"><stop offset="0" stop-color="#fff"/><stop offset="1" stop-color="#e0e0e0"/></linearGradient></defs><path d="M1.5 1.5H9.5L13.5 5.5V15.5H1.5Z" fill="url(#pg)" stroke="#a8a8a8"/><path d="M9.5 1.5V5.5H13.5" fill="#ddd" stroke="#a8a8a8"/><circle cx="10.5" cy="12.5" r="4.5" fill="#1aa52a" stroke="#0c8a1a" stroke-width="0.6"/><path d="M10.5 9.5V15.5M7.5 12.5H13.5" stroke="#fff" stroke-width="1.6"/></svg>
<svg class="a" style="left:42px;top:50px" width="17" height="17"><path d="M1.5 3.5H6L7.5 5H14.5V13.5H1.5Z" fill="#e8d49a" stroke="#b08c3a"/><path d="M3 7H15.5L13.5 13.5H1.5Z" fill="#f0e2b0" stroke="#b08c3a"/><path d="M9 6Q13 6 13.5 11L15.5 11L12.5 16L9 11L11 11Q11 8.5 9 8.5Z" fill="#38b844" stroke="#1a8a22" stroke-width="0.6"/></svg>
<svg class="a" style="left:69px;top:50px" width="17" height="17"><rect x="0.5" y="1" width="15" height="15" rx="1.5" fill="#3a78c8" stroke="#234f98"/><rect x="3" y="1.5" width="10" height="6" fill="#fff"/><path d="M4.5 3.5H11.5M4.5 5.5H11.5" stroke="#bbb" stroke-width="0.8"/><rect x="4" y="10" width="8" height="5.5" fill="#dcdcdc"/><rect x="5" y="11" width="2" height="3.5" fill="#234f98"/></svg>
<svg class="a" style="left:102px;top:50px" width="17" height="17"><rect x="4" y="1" width="8" height="5" fill="#dde8f8" stroke="#333" stroke-width="1"/><rect x="0.5" y="5" width="15" height="7" rx="2" fill="#3c3c3c"/><rect x="2" y="9" width="12" height="1.5" fill="#111"/><path d="M3 11H13L13.5 15.5H2.5Z" fill="#fff" stroke="#333" stroke-width="1"/></svg>
<svg class="a" style="left:129px;top:50px" width="17" height="17"><path d="M1.5 1.5H8.5L11 4V14.5H1.5Z" fill="#f8f8f8" stroke="#888"/><path d="M3 5H7M3 7H6M3 9H6M3 11H6" stroke="#bbb" stroke-width="0.8"/><circle cx="9" cy="9" r="3.8" fill="#dfeef0" stroke="#333" stroke-width="1.1"/><path d="M11.5 11.5L15 15" stroke="#333" stroke-width="2"/></svg>
<svg class="a" style="left:162px;top:50px" width="17" height="17"><path d="M1 7L9 6M2 14L11 5" stroke="#333" stroke-width="2.2"/><path d="M1 7L9 6M2 14L11 5" stroke="#fff" stroke-width="0.9"/><circle cx="12.5" cy="3.5" r="2.3" fill="none" stroke="#8a6a10" stroke-width="1.6"/><circle cx="13" cy="9" r="2.3" fill="none" stroke="#8a6a10" stroke-width="1.6"/></svg>
<svg class="a" style="left:188px;top:50px" width="17" height="17"><path d="M1.5 1.5H6.5L9 4V11.5H1.5Z" fill="#fafafa" stroke="#888"/><path d="M6.5 5.5H11.5L14.5 8.5V15.5H6.5Z" fill="#fafafa" stroke="#888"/></svg>
<svg class="a" style="left:215px;top:50px" width="17" height="17"><rect x="1" y="2.5" width="11" height="13" rx="1" fill="#c88a2a" stroke="#8a5a10"/><rect x="4" y="1" width="5" height="3" fill="#ddd" stroke="#666" stroke-width="0.7"/><path d="M7.5 6.5H12L15.5 10V16.5H7.5Z" fill="#fafafa" stroke="#888"/></svg>
<svg class="a" style="left:244px;top:50px" width="17" height="17"><path d="M15 1.5L6 11" stroke="#d8a040" stroke-width="2.4"/><path d="M15 1.5L6 11" stroke="#f0d090" stroke-width="0.8"/><path d="M6 10L3.5 12.5L1.5 15.5L4.5 13.5L7 11Z" fill="#222" stroke="#222" stroke-width="0.8"/></svg>
<svg class="a" style="left:276px;top:50px" width="17" height="17"><path d="M4 9A5.5 5.5 0 1 1 9.5 14.5" fill="none" stroke="#3a7ad8" stroke-width="2.4"/><path d="M1 4.5L1 11.5L7.5 10Z" fill="#3a7ad8"/></svg>
<svg class="a" style="left:303px;top:50px" width="17" height="17"><path d="M12 9A5.5 5.5 0 1 0 6.5 14.5" fill="none" stroke="#b8b8b8" stroke-width="2.4"/><path d="M15 4.5L15 11.5L8.5 10Z" fill="#b8b8b8"/></svg>
<svg class="a" style="left:336px;top:50px" width="17" height="17"><path d="M8 1L11 4.5H9V7H11.5V5L15 8L11.5 11V9H9V11.5H11L8 15L5 11.5H7V9H4.5V11L1 8L4.5 5V7H7V4.5H5Z" fill="#2a7ad0" stroke="#1a5aa8" stroke-width="0.4"/></svg>
<svg class="a" style="left:362px;top:50px" width="17" height="17"><circle cx="6.5" cy="6.5" r="5" fill="#d8ecf8" stroke="#3a78c8" stroke-width="1.5"/><path d="M10 10L14 14" stroke="#3a78c8" stroke-width="2.5"/><path d="M14 1V9" stroke="#3a78c8" stroke-width="1" stroke-dasharray="1.5,1"/><path d="M12 3L14 0.5L16 3M12 7L14 9.5L16 7" fill="#3a78c8"/></svg>
<svg class="a" style="left:389px;top:50px" width="17" height="17"><circle cx="6.5" cy="6.5" r="5" fill="#d8ecf8" stroke="#3a78c8" stroke-width="1.5"/><path d="M10 10L14 14" stroke="#3a78c8" stroke-width="2.5"/><path d="M11 3Q15 5 12 10" fill="none" stroke="#3a78c8" stroke-width="1.5"/><path d="M9 8L12.5 11L13.5 7Z" fill="#3a78c8"/></svg>
<svg class="a" style="left:422px;top:50px" width="17" height="17"><g shape-rendering="crispEdges"><rect x="1" y="1" width="4" height="3" fill="#3a6ae8"/><rect x="6" y="1" width="4" height="3" fill="#e82020"/><rect x="11" y="1" width="4" height="3" fill="#18b030"/><path d="M1 6H13" stroke="#3a6ae8" stroke-dasharray="1,1"/><path d="M1 8H13" stroke="#e82020" stroke-dasharray="2,1"/><rect x="1" y="10" width="7" height="1.5" fill="#e82020"/><rect x="1" y="13" width="8" height="1.5" fill="#18b030"/></g><text x="9" y="16.5" font-size="9" font-weight="bold" font-family="Liberation Sans" fill="#000">A</text></svg>
<div class="a" style="left:4px;top:77px;width:2px;height:25px;background:repeating-linear-gradient(#b4b4b4 0 2px,transparent 2px 4px)"></div>
<svg class="a" style="left:14px;top:80px" width="17" height="17"><path d="M1.5 11L4 8.5H16L16 14L13.5 16.5H1.5Z" fill="#e8e08a" stroke="#8a8040" stroke-width="0.8"/><path d="M1.5 11H13.5L16 8.5M1.5 13.5H13.5L16 11M13.5 11V16.5" fill="none" stroke="#8a8040" stroke-width="0.8"/><path d="M3.5 9Q4 5 8 3Q11 1.5 15 2L16.5 3V7L12 8.5L8 7L6 10Z" fill="#f0c090" stroke="#a06838" stroke-width="0.8"/><path d="M9 5L13 4.5M9.5 6.5L14 6" stroke="#c08858" stroke-width="0.6"/></svg>
<div class="combo" style="left:37px;top:79px;width:300px;height:20px;border-color:#a0a0a0"></div>
<div class="a" style="left:320px;top:80px;width:16px;height:18px;background:linear-gradient(#f4f4f4,#d9d9d9);border:1px solid #8e8e8e"><div style="position:absolute;left:3px;top:7px;border-left:4px solid transparent;border-right:4px solid transparent;border-top:4px solid #000"></div></div>
<svg class="a" style="left:43px;top:80px" width="11" height="17"><defs><radialGradient id="gb" cx="0.4" cy="0.35" r="0.7"><stop offset="0" stop-color="#8ff08f"/><stop offset="0.5" stop-color="#10c010"/><stop offset="1" stop-color="#087a08"/></radialGradient></defs><circle cx="5" cy="8.5" r="4.6" fill="url(#gb)"/></svg>
<svg class="a" style="left:60px;top:80px" width="17" height="17"><path d="M2 10Q1 7 5 6.5L12 6Q16 6 15 8.5Q14 11 9 11L4 12Q2 12 2 10Z" fill="#c8e0f8" stroke="#78a8d8" stroke-width="1"/></svg>
<svg class="a" style="left:81px;top:80px" width="17" height="17"><path d="M2.5 8V5A3 3 0 0 1 8.5 5V6" fill="none" stroke="#555" stroke-width="1.5"/><rect x="5" y="8" width="9" height="8" fill="#e0c868" stroke="#9a8030" stroke-width="0.8"/></svg>
<svg class="a" style="left:101px;top:80px" width="17" height="17"><circle cx="8" cy="8.5" r="6.3" fill="none" stroke="#222" stroke-width="1.2"/></svg>
<div class="a" style="left:123px;top:82px;font-size:11.5px;line-height:14px">0</div>
<div class="a" style="left:516px;top:74px;width:1px;height:29px;background:#a0a0a0"></div><div class="a" style="left:517px;top:74px;width:1px;height:29px;background:#fff"></div>
<div class="a" style="left:521px;top:77px;width:2px;height:25px;background:repeating-linear-gradient(#b4b4b4 0 2px,transparent 2px 4px)"></div>
<div class="combo" style="left:527px;top:79px;width:117px;height:20px;border-color:#a0a0a0"></div>
<div class="a" style="left:533px;top:83px;width:11px;height:11px;border:1px solid #222;border-radius:50%"></div><div class="a" style="left:549px;top:83px;font-size:10.4px;line-height:14px">ByBlock</div>
<div class="a" style="left:627px;top:80px;width:16px;height:18px;background:linear-gradient(#f4f4f4,#d9d9d9);border:1px solid #8e8e8e"><div style="position:absolute;left:3px;top:7px;border-left:4px solid transparent;border-right:4px solid transparent;border-top:4px solid #000"></div></div>
<div class="a" style="left:646px;top:76px;width:1px;height:25px;background:#b0b0b0"></div>
<div class="combo" style="left:650px;top:79px;width:117px;height:20px;border-color:#a0a0a0"></div>
<div class="a" style="left:652px;top:83px;font-size:10.4px;line-height:14px">ByLayer</div><div class="a" style="left:706px;top:83px;font-size:10.4px;line-height:14px">Solid line</div>
<div class="a" style="left:750px;top:80px;width:16px;height:18px;background:linear-gradient(#f4f4f4,#d9d9d9);border:1px solid #8e8e8e"><div style="position:absolute;left:3px;top:7px;border-left:4px solid transparent;border-right:4px solid transparent;border-top:4px solid #000"></div></div>
<div class="a" style="left:769px;top:76px;width:1px;height:25px;background:#b0b0b0"></div>
<div class="combo" style="left:773px;top:79px;width:117px;height:20px;border-color:#a0a0a0"></div>
<div class="a" style="left:777px;top:89px;width:31px;height:1px;background:#000"></div><div class="a" style="left:812px;top:83px;font-size:10.4px;line-height:14px">ByLayer</div>
<div class="a" style="left:873px;top:80px;width:16px;height:18px;background:linear-gradient(#f4f4f4,#d9d9d9);border:1px solid #8e8e8e"><div style="position:absolute;left:3px;top:7px;border-left:4px solid transparent;border-right:4px solid transparent;border-top:4px solid #000"></div></div>
<svg class="a" style="left:1253px;top:0" width="106" height="20">
<defs><linearGradient id="wb" x1="0" y1="0" x2="0" y2="1"><stop offset="0" stop-color="#a8c8ec"/><stop offset="0.5" stop-color="#8fb4e0"/><stop offset="1" stop-color="#b8d6f4"/></linearGradient></defs>
<path d="M1.5 -1V13.5Q1.5 17.5 5.5 17.5H99.5Q103.5 17.5 103.5 13.5V-1" fill="url(#wb)" stroke="#506e98" stroke-width="1"/>
<path d="M2.5 -1V13.5Q2.5 16.5 5.5 16.5H99.5Q102.5 16.5 102.5 13.5V-1" fill="none" stroke="#d8e8f8" stroke-width="0.8" opacity="0.7"/>
<path d="M29.5 0V17M56.5 0V17" stroke="#506e98" stroke-width="1"/>
<rect x="10.5" y="8.5" width="11" height="4" rx="1" fill="#fff" stroke="#3a4a5a" stroke-width="1"/>
<rect x="39.5" y="2.5" width="9" height="9" rx="1" fill="#fff" stroke="#3a4a5a"/>
<rect x="36.5" y="4.5" width="9" height="9" rx="1" fill="#fff" stroke="#3a4a5a"/>
<rect x="39" y="7" width="4" height="4" fill="none" stroke="#3a4a5a"/>
<path d="M76 4.5L85 12M85 4.5L76 12" stroke="#3a4a5a" stroke-width="4.4" stroke-linecap="round"/>
<path d="M76 4.5L85 12M85 4.5L76 12" stroke="#fff" stroke-width="2.6" stroke-linecap="round"/>
</svg>
<div class="a" style="left:1306px;top:22px;width:17px;height:19px;border:1px solid #b8c8d8;background:linear-gradient(#f4f8fc,#dce8f4)"></div>
<div class="a" style="left:1324px;top:22px;width:17px;height:19px;border:1px solid #b8c8d8;background:linear-gradient(#f4f8fc,#dce8f4)"></div>
<div class="a" style="left:1342px;top:22px;width:17px;height:19px;border:1px solid #b8c8d8;background:linear-gradient(#f4f8fc,#dce8f4)"></div>
<div class="a" style="left:1311px;top:34px;width:7px;height:2px;background:#4a5a6a"></div>
<svg class="a" style="left:1328px;top:26px" width="10" height="10" shape-rendering="crispEdges"><rect x="3.5" y="1.5" width="5" height="4" fill="none" stroke="#4a5a6a"/><rect x="3" y="1" width="6" height="2" fill="#4a5a6a"/><rect x="1.5" y="4.5" width="5" height="4" fill="#eef4fa" stroke="#4a5a6a"/><rect x="1" y="4" width="6" height="2" fill="#4a5a6a"/></svg>
<svg class="a" style="left:1346px;top:27px" width="10" height="10"><path d="M1.5 1.5L8.5 8.5M8.5 1.5L1.5 8.5" stroke="#4a5a6a" stroke-width="1.8"/></svg>
<svg class="a" style="left:0px;top:2px" width="17" height="17"><path d="M8.3 1.5L15.2 16.2L6.8 15.6Z" fill="#1a1aff"/><path d="M0.8 5Q5.5 4 7.8 7.5Q9.8 11.5 7.2 14.8Q5.8 16.4 3.6 16.2Z M3 7.6L4.6 13.8Q6.2 13.2 6.2 11Q6 8.2 3 7.6Z" fill="#18e028" fill-rule="evenodd"/><path d="M11.3 9.8Q9.5 9.6 9.6 11Q9.8 12 11 12.3Q12 12.8 11.2 13.6Q10.3 14 9.4 13.4" fill="none" stroke="#fff" stroke-width="0.9"/></svg>
<svg class="a" style="left:1px;top:25px" width="17" height="17"><path d="M8.3 1.5L15.2 16.2L6.8 15.6Z" fill="#1a1aff"/><path d="M0.8 5Q5.5 4 7.8 7.5Q9.8 11.5 7.2 14.8Q5.8 16.4 3.6 16.2Z M3 7.6L4.6 13.8Q6.2 13.2 6.2 11Q6 8.2 3 7.6Z" fill="#18e028" fill-rule="evenodd"/><path d="M11.3 9.8Q9.5 9.6 9.6 11Q9.8 12 11 12.3Q12 12.8 11.2 13.6Q10.3 14 9.4 13.4" fill="none" stroke="#fff" stroke-width="0.9"/></svg>
<!--/TB-->
<!-- canvas -->
<div class="a" style="left:205px;top:104px;width:2px;height:508px;background:#fff"></div><div class="a" style="left:207px;top:104px;width:1px;height:508px;background:#a0a0a0"></div><div class="a" style="left:208px;top:104px;width:1px;height:508px;background:#404040"></div>
<div class="a" style="left:209px;top:104px;width:1120px;height:493px;background:#000"></div>
<!--DRAW-->
<svg class="a" style="left:0;top:0" width="1360" height="768" viewBox="0 0 1360 768" shape-rendering="crispEdges">
<defs><clipPath id="cv"><rect x="209" y="104" width="1120" height="493"/></clipPath></defs>
<g clip-path="url(#cv)">
<g>
<polyline points="297.5,223 616,200" fill="none" stroke="#ffffff" stroke-width="1"/>
<polyline points="310,224.1 616,202" fill="none" stroke="#ffffff" stroke-width="1"/>
<polyline points="297.5,223.5 293,225.5 289.5,229.5 287.5,236 287.5,254 294.5,280.5" fill="none" stroke="#ffffff" stroke-width="1"/>
<polyline points="294.5,280.5 378,280.5 378,279.5 535,279.5 535,278.5 616,278.5" fill="none" stroke="#ffffff" stroke-width="1"/>
<line x1="297.5" y1="223.5" x2="297.5" y2="280.5" stroke="#ffffff" stroke-width="2"/>
<line x1="299.5" y1="268.5" x2="299.5" y2="280.5" stroke="#ffffff" stroke-width="1"/>
<polyline points="298,227 615,204.5" fill="none" stroke="#0000ff" stroke-width="1"/>
<polyline points="298.5,239.5 594,226.5" fill="none" stroke="#0000ff" stroke-width="1"/>
<polyline points="298,243 591.5,229.5" fill="none" stroke="#ffffff" stroke-width="2"/>
<line x1="298.5" y1="226" x2="298.5" y2="242" stroke="#0000ff" stroke-width="2"/>
<line x1="298.5" y1="263" x2="298.5" y2="269" stroke="#0000ff" stroke-width="2"/>
<line x1="390" y1="263.5" x2="446.5" y2="263.5" stroke="#ffffff" stroke-width="1"/>
<line x1="299" y1="268" x2="401" y2="268" stroke="#ffffff" stroke-width="2"/>
<line x1="401" y1="267.5" x2="446.5" y2="267.5" stroke="#ffffff" stroke-width="1"/>
<line x1="424.5" y1="265" x2="424.5" y2="279.5" stroke="#ffffff" stroke-width="2"/>
<line x1="424.5" y1="272.5" x2="591.5" y2="272.5" stroke="#ffffff" stroke-width="1"/>
<line x1="318.5" y1="225.54495268138803" x2="318.5" y2="238.62013536379018" stroke="#0000ff" stroke-width="2"/>
<line x1="318.5" y1="242.05706984667802" x2="318.5" y2="266" stroke="#ffffff" stroke-width="1"/>
<rect x="317.0" y="263.5" width="3" height="4" fill="#0000ff"/>
<line x1="340" y1="224.01892744479494" x2="340" y2="237.67428087986463" stroke="#0000ff" stroke-width="1"/>
<line x1="340" y1="241.06814310051107" x2="340" y2="266" stroke="#ffffff" stroke-width="2"/>
<rect x="338.5" y="263.5" width="3" height="4" fill="#0000ff"/>
<line x1="361" y1="222.52839116719244" x2="361" y2="236.75042301184433" stroke="#0000ff" stroke-width="2"/>
<line x1="361" y1="240.1022146507666" x2="361" y2="266" stroke="#ffffff" stroke-width="1"/>
<rect x="359.5" y="263.5" width="3" height="4" fill="#0000ff"/>
<line x1="382.5" y1="221.00236593059938" x2="382.5" y2="235.80456852791878" stroke="#0000ff" stroke-width="1"/>
<line x1="382.5" y1="239.11328790459967" x2="382.5" y2="266" stroke="#ffffff" stroke-width="2"/>
<rect x="381.0" y="263.5" width="3" height="4" fill="#0000ff"/>
<line x1="404" y1="219.4763406940063" x2="404" y2="234.85871404399325" stroke="#0000ff" stroke-width="2"/>
<line x1="404" y1="238.12436115843272" x2="404" y2="266" stroke="#ffffff" stroke-width="1"/>
<rect x="402.5" y="263.5" width="3" height="4" fill="#0000ff"/>
<line x1="425" y1="217.9858044164038" x2="425" y2="233.93485617597293" stroke="#0000ff" stroke-width="1"/>
<line x1="425" y1="237.15843270868825" x2="425" y2="266" stroke="#ffffff" stroke-width="2"/>
<rect x="423.5" y="263.5" width="3" height="4" fill="#0000ff"/>
<line x1="446" y1="216.49526813880126" x2="446" y2="233.01099830795263" stroke="#0000ff" stroke-width="2"/>
<line x1="446" y1="236.19250425894379" x2="446" y2="274" stroke="#ffffff" stroke-width="1"/>
<polyline points="440.5,272.5 446,267 451.5,272.5" fill="none" stroke="#ffffff" stroke-width="1"/>
<line x1="467.5" y1="214.9692429022082" x2="467.5" y2="232.06514382402707" stroke="#0000ff" stroke-width="1"/>
<line x1="467.5" y1="235.20357751277683" x2="467.5" y2="274" stroke="#ffffff" stroke-width="2"/>
<polyline points="462.0,272.5 467.5,267 473.0,272.5" fill="none" stroke="#ffffff" stroke-width="1"/>
<line x1="488.5" y1="213.47870662460568" x2="488.5" y2="231.14128595600675" stroke="#0000ff" stroke-width="2"/>
<line x1="488.5" y1="234.23764906303236" x2="488.5" y2="274" stroke="#ffffff" stroke-width="1"/>
<polyline points="483.0,272.5 488.5,267 494.0,272.5" fill="none" stroke="#ffffff" stroke-width="1"/>
<line x1="510" y1="211.95268138801262" x2="510" y2="230.19543147208122" stroke="#0000ff" stroke-width="1"/>
<line x1="510" y1="233.2487223168654" x2="510" y2="274" stroke="#ffffff" stroke-width="2"/>
<polyline points="504.5,272.5 510,267 515.5,272.5" fill="none" stroke="#ffffff" stroke-width="1"/>
<line x1="531" y1="210.4621451104101" x2="531" y2="229.2715736040609" stroke="#0000ff" stroke-width="2"/>
<line x1="531" y1="232.28279386712094" x2="531" y2="274" stroke="#ffffff" stroke-width="1"/>
<polyline points="525.5,272.5 531,267 536.5,272.5" fill="none" stroke="#ffffff" stroke-width="1"/>
<line x1="552.5" y1="208.93611987381703" x2="552.5" y2="228.32571912013537" stroke="#0000ff" stroke-width="1"/>
<line x1="552.5" y1="231.293867120954" x2="552.5" y2="274" stroke="#ffffff" stroke-width="2"/>
<polyline points="547.0,272.5 552.5,267 558.0,272.5" fill="none" stroke="#ffffff" stroke-width="1"/>
<line x1="573" y1="207.48107255520506" x2="573" y2="227.4238578680203" stroke="#0000ff" stroke-width="2"/>
<line x1="573" y1="230.35093696763204" x2="573" y2="274" stroke="#ffffff" stroke-width="1"/>
<polyline points="567.5,272.5 573,267 578.5,272.5" fill="none" stroke="#ffffff" stroke-width="1"/>
<polyline points="424.5,267 430,272.5" fill="none" stroke="#ffffff" stroke-width="1"/>
<polyline points="409.5,269.5 409.5,224.5 417.5,224.5 418.5,226 418.5,231 417.5,232.5 410,232.5" fill="none" stroke="#a0a0a0" stroke-width="1"/>
<rect x="407.5" y="269.5" width="4" height="3" fill="none" stroke="#a0a0a0" stroke-width="1"/>
<line x1="591.5" y1="229.5" x2="591.5" y2="278" stroke="#ffffff" stroke-width="1"/>
<line x1="591.5" y1="201.5" x2="591.5" y2="229" stroke="#0000ff" stroke-width="1"/>
<line x1="594.5" y1="205" x2="594.5" y2="272" stroke="#0000ff" stroke-width="3"/>
<line x1="614.5" y1="204" x2="614.5" y2="272" stroke="#0000ff" stroke-width="2"/>
<line x1="591.5" y1="271.5" x2="615" y2="271.5" stroke="#0000ff" stroke-width="2"/>
<line x1="594" y1="227" x2="615" y2="227" stroke="#ffffff" stroke-width="1"/>
<line x1="571" y1="223.5" x2="700.5" y2="223.5" stroke="#ff0000" stroke-width="1"/>
<line x1="571" y1="226.5" x2="700.5" y2="226.5" stroke="#ff0000" stroke-width="1"/>
<line x1="571.5" y1="223.5" x2="571.5" y2="227" stroke="#ff0000" stroke-width="1"/>
<line x1="592" y1="262" x2="700.5" y2="262" stroke="#ff0000" stroke-width="2"/>
<line x1="616" y1="278.5" x2="700.5" y2="278.5" stroke="#ffffff" stroke-width="1"/>
<line x1="616" y1="193.5" x2="616" y2="278.5" stroke="#ffffff" stroke-width="2"/>
<line x1="616" y1="193.5" x2="634" y2="193.5" stroke="#ffffff" stroke-width="1"/>
<line x1="633.5" y1="193.5" x2="633.5" y2="278.5" stroke="#ffffff" stroke-width="1"/>
<line x1="616" y1="200.5" x2="700.5" y2="200.5" stroke="#ffffff" stroke-width="1"/>
<line x1="623.5" y1="200" x2="623.5" y2="473" stroke="#ff0000" stroke-width="1"/>
<line x1="627.5" y1="200" x2="627.5" y2="508" stroke="#ff0000" stroke-width="1"/>
<polyline points="700.5,169.5 695,170.5 691,172.5 689,175 688.5,177.5 687,195 686.5,215 686,245 687,262 688.5,264 691.5,295 700.5,336.5" fill="none" stroke="#ffffff" stroke-width="1"/>
<line x1="688.5" y1="177.5" x2="700.5" y2="177.5" stroke="#ffffff" stroke-width="1"/>
<line x1="688" y1="263.5" x2="700.5" y2="263.5" stroke="#ffffff" stroke-width="1"/>
<polyline points="700.5,466.5 675,468.5 650,471 632,472.5 623.5,473.5" fill="none" stroke="#ffffff" stroke-width="1"/>
<line x1="623.5" y1="473.5" x2="623.5" y2="522.5" stroke="#ffffff" stroke-width="1"/>
<polyline points="632,476.5 636,475.5 650,474 675,471.5 700.5,469.5" fill="none" stroke="#ffffff" stroke-width="1"/>
<line x1="631.5" y1="473" x2="631.5" y2="508" stroke="#ffffff" stroke-width="1"/>
<line x1="650.5" y1="474.6094890510949" x2="650.5" y2="504.5" stroke="#ffffff" stroke-width="1"/>
<line x1="654.5" y1="474.2007299270073" x2="654.5" y2="504.5" stroke="#ffffff" stroke-width="1"/>
<line x1="674.5" y1="472.1569343065693" x2="674.5" y2="504.5" stroke="#ffffff" stroke-width="1"/>
<line x1="677.5" y1="471.85036496350364" x2="677.5" y2="504.5" stroke="#ffffff" stroke-width="1"/>
<line x1="698.5" y1="469.7043795620438" x2="698.5" y2="504.5" stroke="#ffffff" stroke-width="1"/>
<line x1="632" y1="504.5" x2="700.5" y2="504.5" stroke="#ffffff" stroke-width="1"/>
<line x1="623.5" y1="508.5" x2="700.5" y2="508.5" stroke="#ffffff" stroke-width="1"/>
<polyline points="623.5,522.5 637,522.5 637,523.5 682,523.5 682,524.5 700.5,524.5" fill="none" stroke="#ffffff" stroke-width="1"/>
</g>
<g transform="matrix(-1,-0.0105,0,1,1400,6.46)">
<polyline points="297.5,223 616,200" fill="none" stroke="#ffffff" stroke-width="1"/>
<polyline points="310,224.1 616,202" fill="none" stroke="#ffffff" stroke-width="1"/>
<polyline points="297.5,223.5 293,225.5 289.5,229.5 287.5,236 287.5,254 294.5,280.5" fill="none" stroke="#ffffff" stroke-width="1"/>
<polyline points="294.5,280.5 378,280.5 378,279.5 535,279.5 535,278.5 616,278.5" fill="none" stroke="#ffffff" stroke-width="1"/>
<line x1="297.5" y1="223.5" x2="297.5" y2="280.5" stroke="#ffffff" stroke-width="2"/>
<line x1="299.5" y1="268.5" x2="299.5" y2="280.5" stroke="#ffffff" stroke-width="1"/>
<polyline points="298,227 615,204.5" fill="none" stroke="#0000ff" stroke-width="1"/>
<polyline points="298.5,239.5 594,226.5" fill="none" stroke="#0000ff" stroke-width="1"/>
<polyline points="298,243 591.5,229.5" fill="none" stroke="#ffffff" stroke-width="2"/>
<line x1="298.5" y1="226" x2="298.5" y2="242" stroke="#0000ff" stroke-width="2"/>
<line x1="298.5" y1="263" x2="298.5" y2="269" stroke="#0000ff" stroke-width="2"/>
<line x1="390" y1="263.5" x2="446.5" y2="263.5" stroke="#ffffff" stroke-width="1"/>
<line x1="299" y1="268" x2="401" y2="268" stroke="#ffffff" stroke-width="2"/>
<line x1="401" y1="267.5" x2="446.5" y2="267.5" stroke="#ffffff" stroke-width="1"/>
<line x1="424.5" y1="265" x2="424.5" y2="279.5" stroke="#ffffff" stroke-width="2"/>
<line x1="424.5" y1="272.5" x2="591.5" y2="272.5" stroke="#ffffff" stroke-width="1"/>
<line x1="318.5" y1="225.54495268138803" x2="318.5" y2="238.62013536379018" stroke="#0000ff" stroke-width="2"/>
<line x1="318.5" y1="242.05706984667802" x2="318.5" y2="266" stroke="#ffffff" stroke-width="1"/>
<rect x="317.0" y="263.5" width="3" height="4" fill="#0000ff"/>
<line x1="340" y1="224.01892744479494" x2="340" y2="237.67428087986463" stroke="#0000ff" stroke-width="1"/>
<line x1="340" y1="241.06814310051107" x2="340" y2="266" stroke="#ffffff" stroke-width="2"/>
<rect x="338.5" y="263.5" width="3" height="4" fill="#0000ff"/>
<line x1="361" y1="222.52839116719244" x2="361" y2="236.75042301184433" stroke="#0000ff" stroke-width="2"/>
<line x1="361" y1="240.1022146507666" x2="361" y2="266" stroke="#ffffff" stroke-width="1"/>
<rect x="359.5" y="263.5" width="3" height="4" fill="#0000ff"/>
<line x1="382.5" y1="221.00236593059938" x2="382.5" y2="235.80456852791878" stroke="#0000ff" stroke-width="1"/>
<line x1="382.5" y1="239.11328790459967" x2="382.5" y2="266" stroke="#ffffff" stroke-width="2"/>
<rect x="381.0" y="263.5" width="3" height="4" fill="#0000ff"/>
<line x1="404" y1="219.4763406940063" x2="404" y2="234.85871404399325" stroke="#0000ff" stroke-width="2"/>
<line x1="404" y1="238.12436115843272" x2="404" y2="266" stroke="#ffffff" stroke-width="1"/>
<rect x="402.5" y="263.5" width="3" height="4" fill="#0000ff"/>
<line x1="425" y1="217.9858044164038" x2="425" y2="233.93485617597293" stroke="#0000ff" stroke-width="1"/>
<line x1="425" y1="237.15843270868825" x2="425" y2="266" stroke="#ffffff" stroke-width="2"/>
<rect x="423.5" y="263.5" width="3" height="4" fill="#0000ff"/>
<line x1="446" y1="216.49526813880126" x2="446" y2="233.01099830795263" stroke="#0000ff" stroke-width="2"/>
<line x1="446" y1="236.19250425894379" x2="446" y2="274" stroke="#ffffff" stroke-width="1"/>
<polyline points="440.5,272.5 446,267 451.5,272.5" fill="none" stroke="#ffffff" stroke-width="1"/>
<line x1="467.5" y1="214.9692429022082" x2="467.5" y2="232.06514382402707" stroke="#0000ff" stroke-width="1"/>
<line x1="467.5" y1="235.20357751277683" x2="467.5" y2="274" stroke="#ffffff" stroke-width="2"/>
<polyline points="462.0,272.5 467.5,267 473.0,272.5" fill="none" stroke="#ffffff" stroke-width="1"/>
<line x1="488.5" y1="213.47870662460568" x2="488.5" y2="231.14128595600675" stroke="#0000ff" stroke-width="2"/>
<line x1="488.5" y1="234.23764906303236" x2="488.5" y2="274" stroke="#ffffff" stroke-width="1"/>
<polyline points="483.0,272.5 488.5,267 494.0,272.5" fill="none" stroke="#ffffff" stroke-width="1"/>
<line x1="510" y1="211.95268138801262" x2="510" y2="230.19543147208122" stroke="#0000ff" stroke-width="1"/>
<line x1="510" y1="233.2487223168654" x2="510" y2="274" stroke="#ffffff" stroke-width="2"/>
<polyline points="504.5,272.5 510,267 515.5,272.5" fill="none" stroke="#ffffff" stroke-width="1"/>
<line x1="531" y1="210.4621451104101" x2="531" y2="229.2715736040609" stroke="#0000ff" stroke-width="2"/>
<line x1="531" y1="232.28279386712094" x2="531" y2="274" stroke="#ffffff" stroke-width="1"/>
<polyline points="525.5,272.5 531,267 536.5,272.5" fill="none" stroke="#ffffff" stroke-width="1"/>
<line x1="552.5" y1="208.93611987381703" x2="552.5" y2="228.32571912013537" stroke="#0000ff" stroke-width="1"/>
<line x1="552.5" y1="231.293867120954" x2="552.5" y2="274" stroke="#ffffff" stroke-width="2"/>
<polyline points="547.0,272.5 552.5,267 558.0,272.5" fill="none" stroke="#ffffff" stroke-width="1"/>
<line x1="573" y1="207.48107255520506" x2="573" y2="227.4238578680203" stroke="#0000ff" stroke-width="2"/>
<line x1="573" y1="230.35093696763204" x2="573" y2="274" stroke="#ffffff" stroke-width="1"/>
<polyline points="567.5,272.5 573,267 578.5,272.5" fill="none" stroke="#ffffff" stroke-width="1"/>
<polyline points="424.5,267 430,272.5" fill="none" stroke="#ffffff" stroke-width="1"/>
<polyline points="409.5,269.5 409.5,224.5 417.5,224.5 418.5,226 418.5,231 417.5,232.5 410,232.5" fill="none" stroke="#a0a0a0" stroke-width="1"/>
<rect x="407.5" y="269.5" width="4" height="3" fill="none" stroke="#a0a0a0" stroke-width="1"/>
<line x1="591.5" y1="229.5" x2="591.5" y2="278" stroke="#ffffff" stroke-width="1"/>
<line x1="591.5" y1="201.5" x2="591.5" y2="229" stroke="#0000ff" stroke-width="1"/>
<line x1="594.5" y1="205" x2="594.5" y2="272" stroke="#0000ff" stroke-width="3"/>
<line x1="614.5" y1="204" x2="614.5" y2="272" stroke="#0000ff" stroke-width="2"/>
<line x1="591.5" y1="271.5" x2="615" y2="271.5" stroke="#0000ff" stroke-width="2"/>
<line x1="594" y1="227" x2="615" y2="227" stroke="#ffffff" stroke-width="1"/>
<line x1="298" y1="265" x2="425" y2="265" stroke="#0000ff" stroke-width="2"/>
<line x1="425" y1="265.5" x2="446" y2="265.5" stroke="#fff" stroke-width="1"/>
</g>
<line x1="298" y1="265" x2="446.5" y2="265" stroke="#0000ff" stroke-width="2"/>
<g transform="translate(1401,0) scale(-1,1)">
<line x1="571" y1="223.5" x2="700.5" y2="223.5" stroke="#ff0000" stroke-width="1"/>
<line x1="571" y1="226.5" x2="700.5" y2="226.5" stroke="#ff0000" stroke-width="1"/>
<line x1="571.5" y1="223.5" x2="571.5" y2="227" stroke="#ff0000" stroke-width="1"/>
<line x1="592" y1="262" x2="700.5" y2="262" stroke="#ff0000" stroke-width="2"/>
<line x1="616" y1="278.5" x2="700.5" y2="278.5" stroke="#ffffff" stroke-width="1"/>
<line x1="616" y1="193.5" x2="616" y2="278.5" stroke="#ffffff" stroke-width="2"/>
<line x1="616" y1="193.5" x2="634" y2="193.5" stroke="#ffffff" stroke-width="1"/>
<line x1="633.5" y1="193.5" x2="633.5" y2="278.5" stroke="#ffffff" stroke-width="1"/>
<line x1="616" y1="200.5" x2="700.5" y2="200.5" stroke="#ffffff" stroke-width="1"/>
<line x1="623.5" y1="200" x2="623.5" y2="473" stroke="#ff0000" stroke-width="1"/>
<line x1="627.5" y1="200" x2="627.5" y2="508" stroke="#ff0000" stroke-width="1"/>
<polyline points="700.5,169.5 695,170.5 691,172.5 689,175 688.5,177.5 687,195 686.5,215 686,245 687,262 688.5,264 691.5,295 700.5,336.5" fill="none" stroke="#ffffff" stroke-width="1"/>
<line x1="688.5" y1="177.5" x2="700.5" y2="177.5" stroke="#ffffff" stroke-width="1"/>
<line x1="688" y1="263.5" x2="700.5" y2="263.5" stroke="#ffffff" stroke-width="1"/>
<polyline points="700.5,466.5 675,468.5 650,471 632,472.5 623.5,473.5" fill="none" stroke="#ffffff" stroke-width="1"/>
<line x1="623.5" y1="473.5" x2="623.5" y2="522.5" stroke="#ffffff" stroke-width="1"/>
<polyline points="632,476.5 636,475.5 650,474 675,471.5 700.5,469.5" fill="none" stroke="#ffffff" stroke-width="1"/>
<line x1="631.5" y1="473" x2="631.5" y2="508" stroke="#ffffff" stroke-width="1"/>
<line x1="650.5" y1="474.6094890510949" x2="650.5" y2="504.5" stroke="#ffffff" stroke-width="1"/>
<line x1="654.5" y1="474.2007299270073" x2="654.5" y2="504.5" stroke="#ffffff" stroke-width="1"/>
<line x1="674.5" y1="472.1569343065693" x2="674.5" y2="504.5" stroke="#ffffff" stroke-width="1"/>
<line x1="677.5" y1="471.85036496350364" x2="677.5" y2="504.5" stroke="#ffffff" stroke-width="1"/>
<line x1="698.5" y1="469.7043795620438" x2="698.5" y2="504.5" stroke="#ffffff" stroke-width="1"/>
<line x1="632" y1="504.5" x2="700.5" y2="504.5" stroke="#ffffff" stroke-width="1"/>
<line x1="623.5" y1="508.5" x2="700.5" y2="508.5" stroke="#ffffff" stroke-width="1"/>
<polyline points="623.5,522.5 637,522.5 637,523.5 682,523.5 682,524.5 700.5,524.5" fill="none" stroke="#ffffff" stroke-width="1"/>
</g>
<line x1="700.5" y1="177" x2="700.5" y2="336" stroke="#ffff00" stroke-width="1"/>
<!-- UCS icon -->
<rect x="255.5" y="543.5" width="8" height="8" fill="none" stroke="#fff"/>
<rect x="259" y="547" width="1" height="1" fill="#fff"/>
<line x1="259.5" y1="543" x2="259.5" y2="488" stroke="#fff"/>
<polyline points="255,496 259.5,488 264,496" fill="none" stroke="#fff"/>
<polyline points="255,476 259.5,481 264,476" fill="none" stroke="#fff"/>
<line x1="259.5" y1="481" x2="259.5" y2="486" stroke="#fff"/>
<line x1="264" y1="547.5" x2="318" y2="547.5" stroke="#fff"/>
<polyline points="310,543 318,547.5 310,552" fill="none" stroke="#fff"/>
<line x1="322" y1="543" x2="331" y2="552" stroke="#fff"/>
<line x1="331" y1="543" x2="322" y2="552" stroke="#fff"/>
<!-- cursor -->
<rect x="964.5" y="455.5" width="6" height="6" fill="none" stroke="#fff"/>
<polygon points="968,460 968,471 970.5,468.5 974,476 976,475 973,468 976.5,467.5" fill="#fff" stroke="#fff" stroke-width="0.5"/>
</g>
</svg>
<!--/DRAW-->
<!-- tab bar -->
<div class="a" style="left:209px;top:597px;width:1120px;height:15px;background:#f0f0f0"></div>
<svg class="a" style="left:205px;top:594px" width="180" height="20">
<path d="M4.5 3V13Q4.5 17.5 8 17.5" fill="none" stroke="#fff"/>
<path d="M4 3L9 15Q10 17.5 13 17.5H48Q51 17.5 52 15L55 3Z" fill="#fff" stroke="#333" stroke-width="1"/>
<path d="M55.5 3L60 15Q61 17 63 17H105Q108 17 109 15L112.5 3" fill="none" stroke="#333" stroke-width="1"/>
<path d="M113.5 3L118 15Q119 17 121 17H163Q166 17 167 15L170.5 3" fill="none" stroke="#333" stroke-width="1"/>
</svg>
<div class="a" style="left:220px;top:599px;font-size:11px;line-height:12px">Model</div>
<div class="a" style="left:272px;top:598px;font-size:11px;line-height:12px">Sheet1</div>
<div class="a" style="left:330px;top:598px;font-size:11px;line-height:12px">Sheet2</div>
<div class="a" style="left:205px;top:104px;width:2px;height:508px;background:#fff"></div><div class="a" style="left:207px;top:104px;width:1px;height:508px;background:#a0a0a0"></div><div class="a" style="left:208px;top:104px;width:1px;height:508px;background:#404040"></div>
<div class="a" style="left:32px;top:612px;width:1297px;height:1px;background:#fff"></div>
<div class="a" style="left:32px;top:614px;width:1297px;height:2px;background:#8a8a8a"></div>
<!-- command window -->
<div class="a" style="left:32px;top:618px;width:1297px;height:17px;border-top:1px solid #a0a0a0;border-bottom:1px solid #a0a0a0;border-right:1px solid #a0a0a0;background:#f0f0f0"></div>
<div class="a" style="left:32px;top:619px;width:1px;height:15px;background:#fff"></div><div class="a" style="left:32px;top:635px;width:1297px;height:2px;background:#fff"></div>
<div class="a" style="left:34px;top:620px;font-size:10.4px;line-height:13px">Okno poleceń</div>
<svg class="a" style="left:1301px;top:621px" width="10" height="10" shape-rendering="crispEdges"><rect x="3.5" y="1.5" width="5" height="4" fill="none" stroke="#000"/><rect x="3" y="1" width="6" height="2" fill="#000"/><rect x="1.5" y="4.5" width="5" height="4" fill="#f0f0f0" stroke="#000"/><rect x="1" y="4" width="6" height="2" fill="#000"/></svg>
<svg class="a" style="left:1316px;top:622px" width="10" height="9"><path d="M1 1L9 8M9 1L1 8" stroke="#000" stroke-width="1.6"/></svg>
<div class="a" style="left:31px;top:637px;width:1298px;height:87px;background:#fff;border:1px solid #828790"></div>
<div class="cmd" style="top:640px">Nie znaleziono pliku - *D40</div>
<div class="cmd" style="top:656px">Nie znaleziono pliku - *D41</div>
<div class="cmd" style="top:672px">Nie znaleziono pliku - *D42</div>
<div class="cmd" style="top:688px">Nie znaleziono pliku - *Model_Space</div>
<div class="cmd" style="top:704px">Nie znaleziono pliku - *Paper_Space</div>
<!-- cmd scrollbar -->
<div class="a" style="left:1312px;top:638px;width:16px;height:85px;background:linear-gradient(90deg,#e4e4e4,#f6f6f6 30%,#f6f6f6 70%,#e8e8e8)"></div>
<div class="a" style="left:1316px;top:645px;border-left:4px solid transparent;border-right:4px solid transparent;border-bottom:4px solid #3d3d3d"></div>
<div class="a" style="left:1313px;top:698px;width:14px;height:7px;border:1px solid #979797;border-radius:2px;background:linear-gradient(90deg,#f4f4f4 0%,#e6e6e6 45%,#d4d4d4 55%,#c8c8c8 100%)"></div>
<div class="a" style="left:1316px;top:712px;border-left:4px solid transparent;border-right:4px solid transparent;border-top:4px solid #3d3d3d"></div>
<div class="a" style="left:32px;top:724px;width:1297px;height:16px;background:#fff"></div>
<div class="a" style="left:36px;top:725px;font-size:11px;line-height:14px;color:#000">:</div>
<!-- right toolbar -->
<div class="vl" style="left:1329px;top:104px;height:636px;background:#fff"></div>
<!-- status bar -->
<div class="a" style="left:0;top:740px;width:1360px;height:26px;background:#f0f0f0"></div>
<div class="a" style="left:0;top:766px;width:1360px;height:1px;background:#45536a"></div>
<div class="a" style="left:0;top:767px;width:1360px;height:1px;background:#b8d0ea"></div>
<div class="vl" style="left:446px;top:742px;height:23px;background:#d8d8d8"></div>
<div class="sbtn" style="left:453px;width:77px">Przyciąganie</div>
<div class="sbtn" style="left:538px;width:42px">Siatka</div>
<div class="sbtn" style="left:588px;width:35px">Orto</div>
<div class="vl" style="left:626px;top:742px;height:23px;background:#d8d8d8"></div>
<div class="sbtn on" style="left:633px;width:70px">Biegunowy</div>
<div class="sbtn on" style="left:711px;width:144px">pRZyciąganie elementów</div>
<div class="sbtn on" style="left:862px;width:46px">ETrack</div>
<div class="vl" style="left:911px;top:742px;height:23px;background:#d8d8d8"></div>
<div class="a" style="left:916px;top:748px;font-size:10.9px;line-height:14px">(6742.737,6268.893,0)</div>
</body></html>
